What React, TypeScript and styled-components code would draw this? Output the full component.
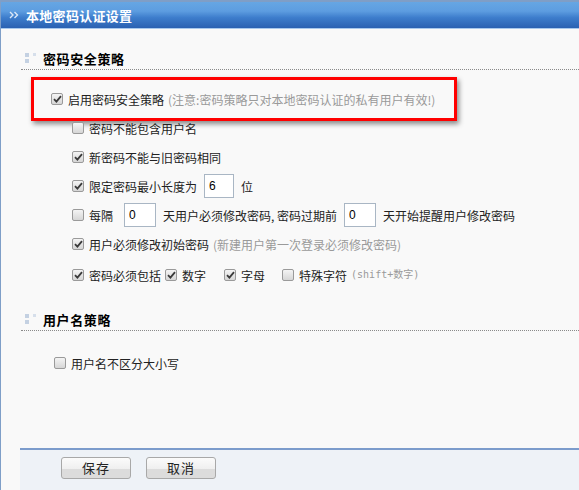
import React from 'react';
import styled, { createGlobalStyle } from 'styled-components';

const GlobalStyle = createGlobalStyle`
  html, body { margin: 0; padding: 0; background: #f9f9f9; }
  body { font-family: "Noto Sans CJK SC", "Noto Sans", sans-serif; font-size: 12px; color: #222; }
`;

const Page = styled.div`
  width: 579px;
  height: 490px;
  display: flex;
  flex-direction: column;
  border-left: 1px solid #7f9fc8;
  box-sizing: border-box;
  background: #f9f9f9;
  overflow: hidden;
`;

const Header = styled.div`
  height: 26px;
  flex-shrink: 0;
  border-top: 2px solid #7f9ec6;
  border-bottom: 1px solid #a8c8ec;
  background: linear-gradient(to bottom, #66a6e3 0%, #5d9de0 35%, #3d7dcc 60%, #2a61b2 100%);
  display: flex;
  align-items: center;
  padding-left: 9px;
  gap: 6px;
  margin-left: -1px;
`;

const HeaderTitle = styled.span`
  color: #fff;
  font-weight: bold;
  font-size: 13px;
  letter-spacing: 0.3px;
`;

const Body = styled.div`
  padding-left: 20px;
  display: flex;
  flex-direction: column;
  flex: 1;
`;

const SectionTitle = styled.div<{ $top: number }>`
  margin-top: ${p => p.$top}px;
  height: 22px;
  border-bottom: 1px dotted #8a8a8a;
  display: flex;
  align-items: center;
  padding-left: 4px;
  gap: 6px;
  font-weight: bold;
  font-size: 13px;
  letter-spacing: 0.6px;
  color: #000;
`;

const Highlight = styled.div`
  margin: 7px 0 0 10px;
  width: 426px;
  height: 44px;
  box-sizing: border-box;
  border: 3px solid #ff0000;
  box-shadow: 2px 3px 5px rgba(0, 0, 0, 0.45);
  display: flex;
  align-items: center;
  padding-left: 17px;
`;

const List = styled.div`
  margin-top: -5px;
  padding-left: 51px;
  display: flex;
  flex-direction: column;
  gap: 5px;
`;

const Row = styled.div<{ $indent?: number; $top?: number }>`
  height: 24px;
  display: flex;
  align-items: center;
  white-space: nowrap;
  margin-left: ${p => p.$indent || 0}px;
  margin-top: ${p => p.$top || 0}px;
`;

const LastRow = styled(Row)`
  height: 28px;
  margin-top: 0;
`;

const Box = styled.span<{ $on?: boolean }>`
  width: 12px;
  height: 12px;
  box-sizing: border-box;
  border: 1px solid #9a9a9a;
  border-radius: 2px;
  background: linear-gradient(to bottom, #f4f4f4, #d6d6d6);
  display: inline-flex;
  align-items: center;
  justify-content: center;
  margin-right: 5px;
  flex-shrink: 0;
`;

const Note = styled.span`
  color: #9a9a9a;
  margin-left: 4px;
`;

const SmallNote = styled.span`
  color: #9a9a9a;
  font-size: 10px;
  font-family: "DejaVu Sans Mono", "Noto Sans CJK SC", monospace;
  margin-left: 4px;
  position: relative;
  top: -2px;
`;

const NumInput = styled.input<{ $w: number; $left?: number }>`
  width: ${p => p.$w}px;
  height: 24px;
  box-sizing: border-box;
  border: 1px solid #a9b6c4;
  background: #fff;
  font-size: 12px;
  font-family: "Liberation Sans", sans-serif;
  padding: 0 4px;
  margin: 0 7px 0 ${p => p.$left ?? 7}px;
  outline: none;
`;

const Sub = styled.span<{ $gap: number }>`
  display: inline-flex;
  align-items: center;
  margin-left: ${p => p.$gap}px;
`;

const Footer = styled.div`
  margin: auto 0 0 19px;
  height: 42px;
  box-sizing: border-box;
  flex-shrink: 0;
  border-top: 2px solid #7c9ccc;
  background: #eef2f7;
  display: flex;
  align-items: flex-start;
  padding: 7px 0 0 41px;
  gap: 15px;
`;

const Button = styled.button`
  width: 70px;
  height: 22px;
  border: 1px solid #a8a8a8;
  border-radius: 3px;
  background: linear-gradient(to bottom, #fbfbfb 0%, #efefef 55%, #dcdcdc 56%, #dcdcdc 100%);
  font-family: "Noto Sans CJK SC", sans-serif;
  font-size: 13px;
  color: #222;
  padding: 0;
  line-height: 20px;
  letter-spacing: 1px;
`;

const Check = ({ on }: { on?: boolean }) => (
  <Box $on={on}>
    {on && (
      <svg width="9" height="8" viewBox="0 0 9 8">
        <path d="M1 4.2 L3.4 6.6 L8 1.2" stroke="#3a3a3a" strokeWidth="1.8" fill="none" />
      </svg>
    )}
  </Box>
);

const Arrows = () => (
  <svg width="11" height="8" viewBox="0 0 11 8">
    <path d="M1 1 L4 4 L1 7 M5.5 1 L8.5 4 L5.5 7" stroke="#dbe8f7" strokeWidth="1.4" fill="none" />
  </svg>
);

const Dots = () => (
  <svg width="12" height="11" viewBox="0 0 12 11">
    <rect x="0" y="0" width="4" height="4" fill="#c4d1e2" />
    <rect x="0" y="6" width="4" height="4" fill="#c4d1e2" />
    <rect x="8" y="0" width="3" height="3" fill="#d6dfeb" />
  </svg>
);

export default function App() {
  return (
    <>
      <GlobalStyle />
      <Page>
        <Header>
          <Arrows />
          <HeaderTitle>本地密码认证设置</HeaderTitle>
        </Header>
        <Body>
          <SectionTitle $top={18}>
            <Dots />
            密码安全策略
          </SectionTitle>
          <Highlight>
            <Check on />
            启用密码安全策略
            <Note>(注意:密码策略只对本地密码认证的私有用户有效!)</Note>
          </Highlight>
          <List>
            <Row>
              <Check />
              密码不能包含用户名
            </Row>
            <Row>
              <Check on />
              新密码不能与旧密码相同
            </Row>
            <Row>
              <Check on />
              限定密码最小长度为
              <NumInput $w={30} defaultValue="6" />
              位
            </Row>
            <Row>
              <Check />
              每隔
              <NumInput $w={32} $left={11} defaultValue="0" />
              天用户必须修改密码, 密码过期前
              <NumInput $w={32} defaultValue="0" />
              天开始提醒用户修改密码
            </Row>
            <Row>
              <Check on />
              用户必须修改初始密码
              <Note>(新建用户第一次登录必须修改密码)</Note>
            </Row>
            <LastRow>
              <Check on />
              密码必须包括
              <Sub $gap={4}>
                <Check on />
                数字
              </Sub>
              <Sub $gap={18}>
                <Check on />
                字母
              </Sub>
              <Sub $gap={17}>
                <Check />
                特殊字符
              </Sub>
              <SmallNote>(shift+数字)</SmallNote>
            </LastRow>
          </List>
          <SectionTitle $top={19}>
            <Dots />
            用户名策略
          </SectionTitle>
          <Row $indent={33} $top={20}>
            <Check />
            用户名不区分大小写
          </Row>
        </Body>
        <Footer>
          <Button>保存</Button>
          <Button>取消</Button>
        </Footer>
      </Page>
    </>
  );
}
